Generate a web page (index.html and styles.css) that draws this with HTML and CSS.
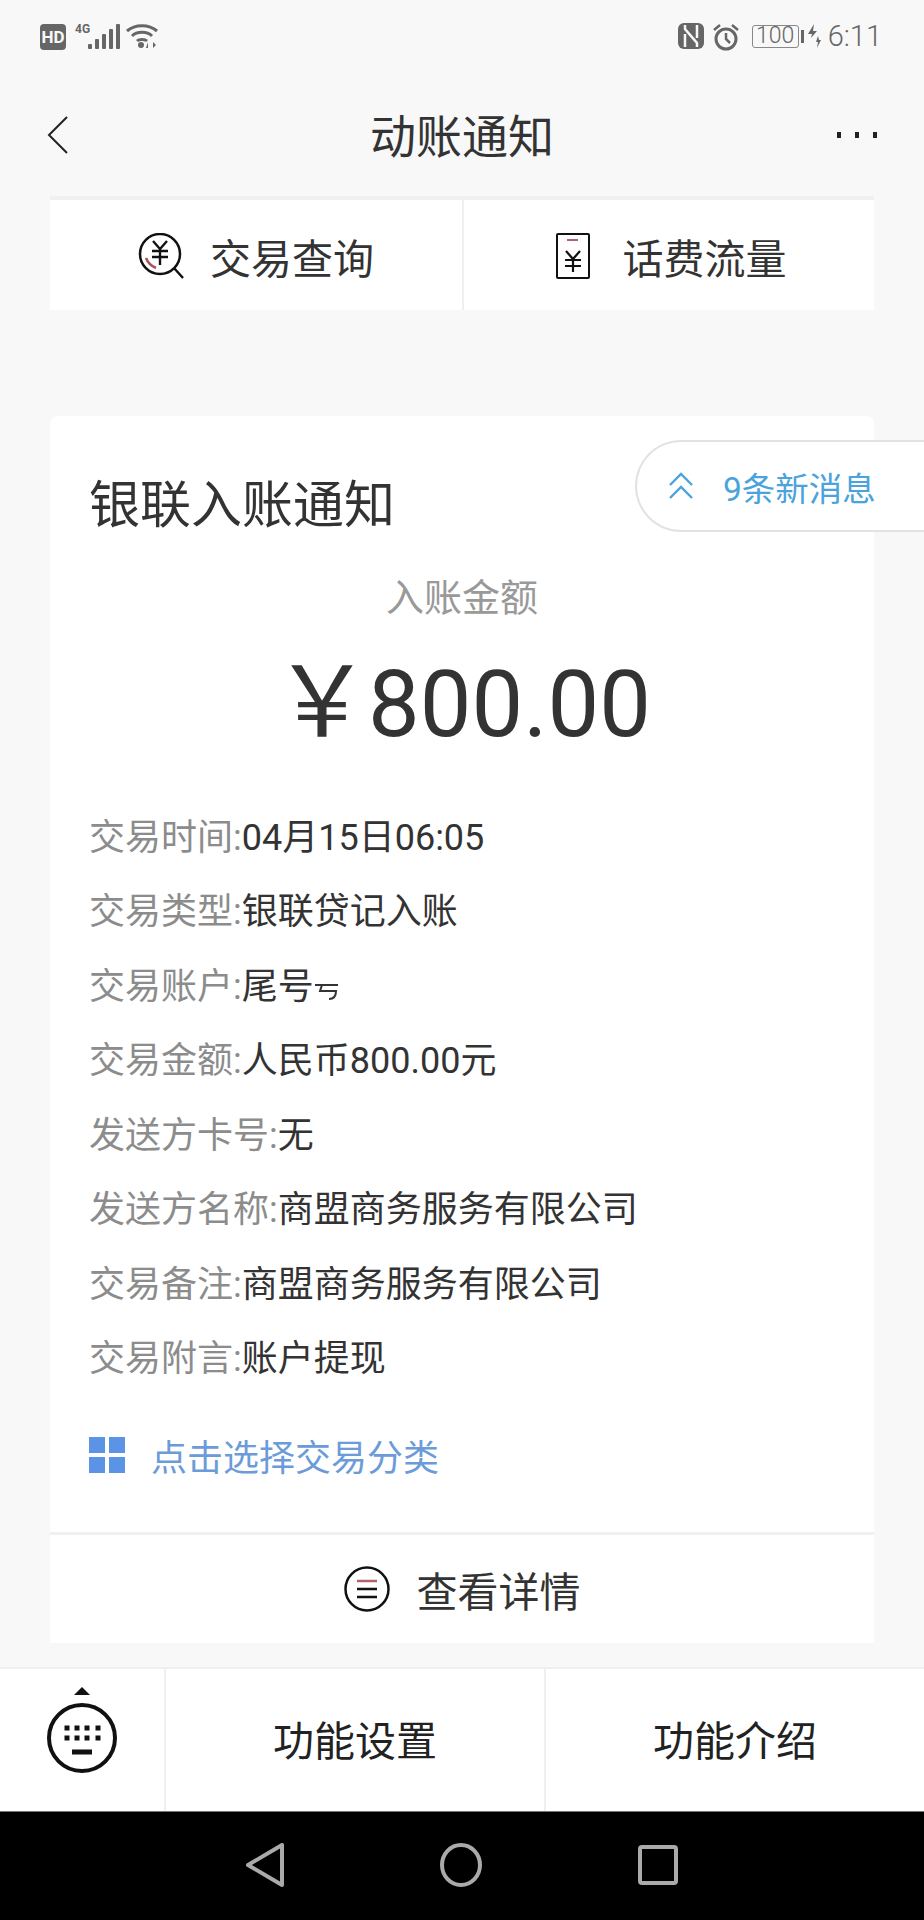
FILE: index.html
```html
<!DOCTYPE html>
<html lang="zh-CN">
<head>
    <meta charset="UTF-8">
    <meta name="viewport" content="width=device-width, initial-scale=1.0">
    <title>动账通知</title>
    <link rel="stylesheet" href="styles.css">
</head>
<body>
    <div class="status-bar">
        <div class="status-left">
            <span class="hd">HD</span>
            <span class="net">4G</span>
            <svg class="signal" width="32" height="26" viewBox="0 0 32 26" fill="#666">
                <rect x="0" y="20" width="4" height="5" rx="1"/>
                <rect x="7" y="15" width="4" height="10" rx="1"/>
                <rect x="14" y="10" width="4" height="15" rx="1"/>
                <rect x="21" y="5" width="4" height="20" rx="1"/>
                <rect x="28" y="0" width="4" height="25" rx="1"/>
            </svg>
            <svg class="wifi" width="32" height="26" viewBox="0 0 32 26" fill="none" stroke="#666" stroke-width="3">
                <path d="M1 8C9 1 23 1 31 8"/>
                <path d="M6 13C11 8 21 8 26 13"/>
                <path d="M11 18C13 16 19 16 21 18"/>
                <circle cx="15" cy="22" r="3" fill="#666" stroke="none"/>
                <path d="M22 25V19l-2 6zM27 19v6l3-3z" fill="#666" stroke="none"/>
            </svg>
        </div>
        <div class="status-right">
            <svg width="26" height="26" viewBox="0 0 26 26">
                <rect width="26" height="26" rx="6" fill="#666"/>
                <path d="M7 2v4l12 14v4M7 24V11M19 2v13" fill="none" stroke="#f8f8f8" stroke-width="2.5"/>
            </svg>
            <svg class="alarm" width="28" height="28" viewBox="0 0 28 28" fill="none" stroke="#666" stroke-width="3">
                <circle cx="14" cy="16" r="10"/>
                <path d="M14 10v6l4 4" stroke-width="2.5"/>
                <path d="M2 7l6-5M26 7l-6-5" stroke-width="2.5"/>
            </svg>
            <span class="battery">100</span>
            <span class="battery-cap"></span>
            <svg class="bolt" width="14" height="24" viewBox="0 0 14 24" fill="#666">
                <path d="M7 0L1 10h4l-1 4 6-7H6zM11 12l-2 6h2l-1 6 4-8h-2z"/>
            </svg>
            <span class="clock">6:11</span>
        </div>
    </div>

    <div class="nav-bar">
        <svg class="back" width="22" height="38" viewBox="0 0 22 38" fill="none" stroke="#222" stroke-width="2">
            <path d="M20 1L2 19l18 18"/>
        </svg>
        <h1>动账通知</h1>
        <div class="more"><i></i><i></i><i></i></div>
    </div>

    <div class="tabs">
        <div class="tab tab-query">
            <svg width="46" height="46" viewBox="0 0 46 46" fill="none" stroke="#111" stroke-width="2.5">
                <circle cx="22" cy="21" r="20"/>
                <path d="M36 35l9 10"/>
                <path d="M15 8l7 8 7-8M14 18h16M14 24h16M22 16v16" stroke-width="2.4"/>
                <path d="M8 25c2 5 5 8 10 10" stroke="#a8525c"/>
            </svg>
            <span>交易查询</span>
        </div>
        <div class="tab tab-phone">
            <svg width="34" height="46" viewBox="0 0 34 46" fill="none" stroke="#111" stroke-width="2">
                <rect x="1" y="1" width="32" height="44" rx="1"/>
                <path d="M11 7h11" stroke="#b5606c"/>
                <path d="M10 18l7 8 7-8M9 27h16M9 33h16M17 26v13" stroke-width="2.2"/>
            </svg>
            <span>话费流量</span>
        </div>
    </div>

    <div class="card">
        <div class="pill">
            <svg width="26" height="28" viewBox="0 0 26 28" fill="none" stroke="#4aa3dc" stroke-width="2.4">
                <path d="M2 13L13 2l11 11M2 26l11-11 11 11"/>
            </svg>
            <span>9条新消息</span>
        </div>
        <div class="card-title">银联入账通知</div>
        <div class="amount-label">入账金额</div>
        <div class="amount"><span class="yen">￥</span>800.00</div>
        <ul class="rows">
            <li><label>交易时间:</label>04月15日06:05</li>
            <li><label>交易类型:</label>银联贷记入账</li>
            <li>
                <label>交易账户:</label>尾号<svg class="smudge" width="24" height="20" viewBox="0 0 24 20" fill="none" stroke="#333" stroke-width="2">
                    <path d="M0 4h23M7 4l-2 6h16c0 5-2 8-7 8"/>
                </svg>
            </li>
            <li><label>交易金额:</label>人民币800.00元</li>
            <li><label>发送方卡号:</label>无</li>
            <li><label>发送方名称:</label>商盟商务服务有限公司</li>
            <li><label>交易备注:</label>商盟商务服务有限公司</li>
            <li><label>交易附言:</label>账户提现</li>
        </ul>
        <div class="category">
            <div class="grid-icon"><i></i><i></i><i></i><i></i></div>
            <span>点击选择交易分类</span>
        </div>
        <div class="card-footer">
            <svg width="46" height="46" viewBox="0 0 46 46" fill="none" stroke="#111" stroke-width="2.5">
                <circle cx="23" cy="23" r="21.5"/>
                <path d="M13 15h20" stroke="#b5606c"/>
                <path d="M13 23h20M13 31h20"/>
            </svg>
            <span>查看详情</span>
        </div>
    </div>

    <div class="bottom-menu">
        <div class="menu-key">
            <svg width="70" height="86" viewBox="0 0 70 86" fill="#111">
                <path d="M35 0l8 8H27z"/>
                <circle cx="35" cy="51" r="33" fill="none" stroke="#111" stroke-width="4"/>
                <g>
                    <rect x="17.5" y="38.5" width="5" height="5"/><rect x="27.5" y="38.5" width="5" height="5"/>
                    <rect x="37.5" y="38.5" width="5" height="5"/><rect x="48.5" y="38.5" width="5" height="5"/>
                    <rect x="17.5" y="48.5" width="5" height="5"/><rect x="27.5" y="48.5" width="5" height="5"/>
                    <rect x="37.5" y="48.5" width="5" height="5"/><rect x="48.5" y="48.5" width="5" height="5"/>
                    <rect x="25" y="62.5" width="20" height="5"/>
                </g>
            </svg>
        </div>
        <div class="menu-item">功能设置</div>
        <div class="menu-item">功能介绍</div>
    </div>

    <div class="system-nav">
        <svg width="38" height="44" viewBox="0 0 38 44" fill="none" stroke="#aaa" stroke-width="4" stroke-linejoin="round">
            <path d="M36 2v40L2 22z"/>
        </svg>
        <svg width="42" height="44" viewBox="0 0 42 44" fill="none" stroke="#aaa" stroke-width="4">
            <ellipse cx="21" cy="22" rx="19" ry="20"/>
        </svg>
        <svg width="40" height="40" viewBox="0 0 40 40" fill="none" stroke="#aaa" stroke-width="4" stroke-linejoin="round">
            <rect x="2" y="2" width="36" height="36" rx="2"/>
        </svg>
    </div>
</body>
</html>
```

FILE: styles.css
```css
* {
    box-sizing: border-box;
}
body {
    margin: 0;
    width: 924px;
    height: 1920px;
    overflow: hidden;
    display: flex;
    flex-direction: column;
    background: #f8f8f8;
    color: #333;
    font-family: Roboto, "Noto Sans CJK SC", sans-serif;
}

/* status bar */
.status-bar {
    height: 72px;
    padding: 23px 42px 0 40px;
    display: flex;
    justify-content: space-between;
    align-items: flex-start;
    flex-shrink: 0;
}
.status-left, .status-right {
    display: flex;
    align-items: flex-start;
}
.hd {
    width: 26px;
    height: 26px;
    margin-top: 1px;
    border-radius: 4px;
    background: #666;
    color: #f8f8f8;
    font-size: 17px;
    font-weight: 700;
    line-height: 26px;
    text-align: center;
}
.net {
    margin: 0 0 0 9px;
    color: #666;
    font-size: 12px;
    font-weight: 700;
    line-height: 12px;
}
.signal {
    margin: 1px 0 0 -2px;
}
.wifi {
    margin: 0 0 0 6px;
}
.alarm {
    margin-left: 8px;
}
.battery {
    width: 47px;
    height: 23px;
    margin: 2px 0 0 12px;
    border: 1.5px solid #888;
    border-radius: 3px;
    color: #666;
    font-size: 23px;
    font-weight: 300;
    line-height: 20px;
    text-align: center;
}
.battery-cap {
    width: 3px;
    height: 13px;
    margin: 7px 0 0 2px;
    background: #666;
}
.bolt {
    margin: 1px 0 0 3px;
}
.clock {
    margin-left: 7px;
    color: #666;
    font-size: 29px;
    font-weight: 300;
    line-height: 26px;
}

/* nav */
.nav-bar {
    height: 124px;
    padding: 6px 47px 0;
    display: flex;
    align-items: center;
    justify-content: space-between;
    flex-shrink: 0;
}
.back {
    margin-right: 18px;
    margin-top: -4px;
}
.nav-bar h1 {
    margin: 0;
    flex: 1;
    text-align: center;
    color: #333;
    font-size: 46px;
    font-weight: 400;
    line-height: 60px;
}
.more {
    display: flex;
    gap: 14px;
    margin-top: -4px;
}
.more i {
    width: 4px;
    height: 6px;
    background: #222;
}

/* tabs */
.tabs {
    height: 114px;
    margin: 0 50px;
    display: flex;
    border-top: 4px solid #f0f0f0;
    background: #fff;
    flex-shrink: 0;
}
.tab {
    flex: 0 0 50%;
    display: flex;
    align-items: center;
    justify-content: center;
    font-size: 41px;
    padding-top: 2px;
}
.tab-query {
    gap: 26px;
}
.tab-phone {
    gap: 33px;
    padding-left: 4px;
    border-left: 2px solid #efefef;
}

/* card */
.card {
    height: 1227px;
    margin: 106px 50px 0;
    padding-top: 58px;
    position: relative;
    background: #fff;
    border-radius: 8px 8px 0 0;
    flex-shrink: 0;
}
.pill {
    position: absolute;
    top: 24px;
    left: 585px;
    width: 289px;
    height: 92px;
    display: flex;
    align-items: center;
    gap: 29px;
    padding-left: 31px;
    background: #fff;
    border: 2px solid #e2e2e2;
    border-right: none;
    border-radius: 46px 0 0 46px;
    color: #4aa3dc;
    font-size: 33.5px;
}
.card-title {
    padding-left: 39px;
    font-size: 51px;
    line-height: 64px;
}
.amount-label {
    margin-top: 35px;
    text-align: center;
    color: #999;
    font-size: 38px;
    line-height: 50px;
}
.amount {
    margin-top: 25px;
    text-align: center;
    font-size: 92px;
    line-height: 110px;
}
.yen {
    font-size: 98px;
    margin-right: -3px;
}
.rows {
    list-style: none;
    margin: 40.5px 0 0;
    padding: 0 0 0 39px;
}
.rows li {
    height: 74.5px;
    font-size: 36px;
    line-height: 74.5px;
    white-space: nowrap;
}
.rows label {
    color: #8c8c8c;
}
.smudge {
    margin-left: 1px;
    vertical-align: -2px;
}
.category {
    margin: 38.5px 0 0 39px;
    height: 40px;
    display: flex;
    align-items: center;
    gap: 26px;
    color: #6b9bd8;
    font-size: 36px;
}
.grid-icon {
    display: grid;
    grid-template-columns: 16px 16px;
    grid-auto-rows: 16px;
    gap: 4px;
}
.grid-icon i {
    background: #5b93e6;
}
.card-footer {
    height: 113px;
    margin-top: 56.5px;
    border-top: 3px solid #f0f0f0;
    display: flex;
    align-items: center;
    justify-content: center;
    gap: 27px;
    font-size: 41px;
    padding-bottom: 2px;
}

/* bottom menu */
.bottom-menu {
    height: 144px;
    margin-top: 24px;
    display: flex;
    background: #fff;
    border-top: 2px solid #efefef;
    flex-shrink: 0;
}
.menu-key {
    width: 164px;
    display: flex;
    align-items: center;
    justify-content: center;
}
.menu-key svg {
    margin-bottom: 20px;
}
.menu-item {
    flex: 1;
    display: flex;
    align-items: center;
    justify-content: center;
    border-left: 2px solid #efefef;
    color: #222;
    font-size: 41px;
    padding-bottom: 4px;
}

/* android nav */
.system-nav {
    flex: 1;
    display: flex;
    align-items: center;
    justify-content: center;
    gap: 156px;
    background: #000;
    border-top: 1px solid #777;
    padding-bottom: 2px;
}
```
